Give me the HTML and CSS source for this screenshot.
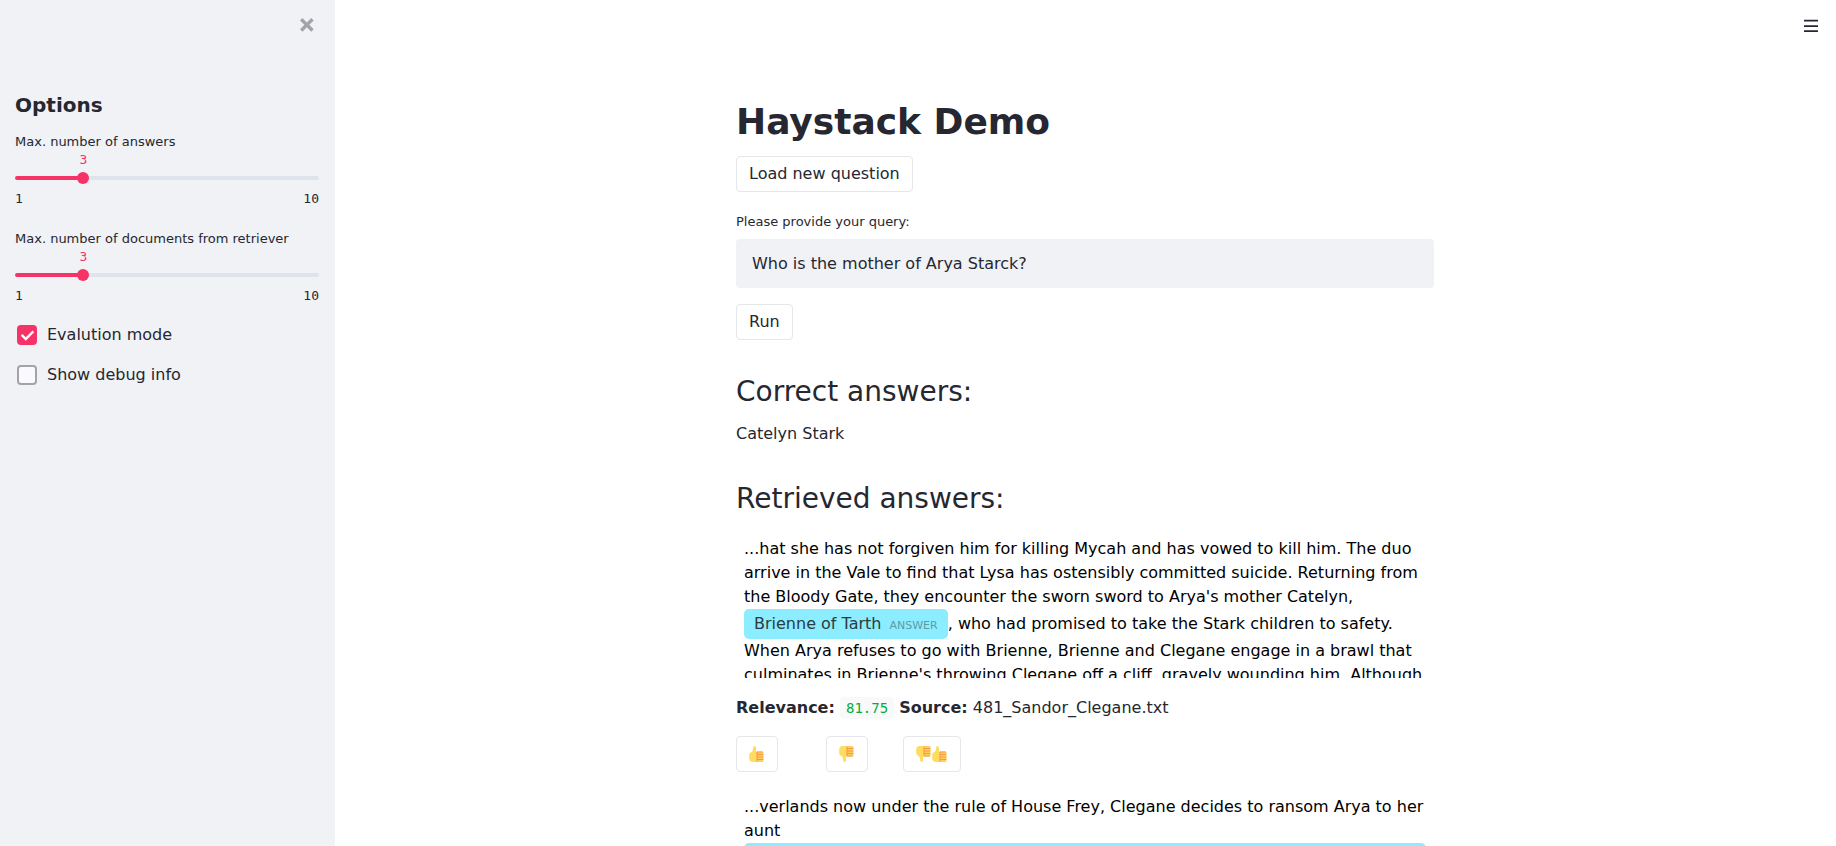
FILE: index.html
```html
<!DOCTYPE html>
<html lang="en">
<head>
<meta charset="utf-8">
<meta name="viewport" content="width=device-width, initial-scale=1">
<title>Haystack Demo</title>
<link rel="stylesheet" href="styles.css">
</head>
<body>
<svg class="sprite" aria-hidden="true">
  <symbol id="thumb" viewBox="0 0 16 16">
    <path fill="#ffdc5d" d="M5.200.2C6.600 0 7.100.9 7.100 2c0 1.600-.2 2.900-.1 3.700h1.500V16H4.200C1.500 16 .2 14.800.2 12.600V8.900c0-1.500.8-2.300 2.300-2.900C3.900 5.200 4.100 3.300 4.200 1.300 4.200.7 4.600.3 5.200.2z"/>
    <rect x="7.500" y="5.500" width="7" height="10.500" rx="1.300" fill="#ffd05c"/>
    <path fill="none" stroke="#f39a48" stroke-width="1" d="M7.800 6h6M8 8.500h6.300M8 11h6.300M8 13.500h6.300M8 6v9.500"/>
  </symbol>
</svg>
<div class="app">
  <aside class="sidebar">
    <div class="sidebar-top">
      <button class="icon-button" aria-label="Close sidebar">
        <svg width="14" height="14" viewBox="0 0 8 8" fill="currentColor"><path d="M1.406 0l-1.406 1.406.719.719 1.781 1.781-1.781 1.781-.719.719 1.406 1.438.719-.719 1.781-1.781 1.781 1.781.719.719 1.438-1.438-.719-.719-1.781-1.781 1.781-1.781.719-.719-1.438-1.406-.719.719-1.781 1.781-1.781-1.781-.719-.719z"/></svg>
      </button>
    </div>
    <h2 class="sidebar-title">Options</h2>
    <div class="slider">
      <label class="field-label" for="answers">Max. number of answers</label>
      <div class="slider-value"><output for="answers">3</output></div>
      <div class="slider-rail"><input id="answers" type="range" min="1" max="10" value="3"></div>
      <div class="slider-ends"><span>1</span><span>10</span></div>
    </div>
    <div class="slider">
      <label class="field-label" for="documents">Max. number of documents from retriever</label>
      <div class="slider-value"><output for="documents">3</output></div>
      <div class="slider-rail"><input id="documents" type="range" min="1" max="10" value="3"></div>
      <div class="slider-ends"><span>1</span><span>10</span></div>
    </div>
    <div class="checks">
      <label class="check"><input type="checkbox" checked>Evalution mode</label>
      <label class="check"><input type="checkbox">Show debug info</label>
    </div>
  </aside>
  <main class="main">
    <header class="topbar">
      <button class="icon-button menu" aria-label="Menu">
        <svg width="14" height="14" viewBox="0 0 14 14" fill="currentColor"><path d="M0 .7h14v1.700H0zM0 6.200h14v1.700H0zM0 11.200h14v1.700H0z"/></svg>
      </button>
    </header>
    <div class="content">
      <h1>Haystack Demo</h1>
      <button class="button">Load new question</button>
      <label class="field-label query-label" for="query">Please provide your query:</label>
      <input class="query" id="query" type="text" value="Who is the mother of Arya Starck?">
      <button class="button">Run</button>
      <h2>Correct answers:</h2>
      <p class="correct">Catelyn Stark</p>
      <h2>Retrieved answers:</h2>
      <div class="passage">...hat she has not forgiven him for killing Mycah and has vowed to kill him. The duo arrive in the Vale to find that Lysa has ostensibly committed suicide. Returning from the Bloody Gate, they encounter the sworn sword to Arya's mother Catelyn, <mark class="chip">Brienne of Tarth<span class="chip-tag">ANSWER</span></mark>, who had promised to take the Stark children to safety. When Arya refuses to go with Brienne, Brienne and Clegane engage in a brawl that culminates in Brienne's throwing Clegane off a cliff, gravely wounding him. Although</div>
      <p class="meta"><strong>Relevance:</strong> <code>81.75</code> <strong>Source:</strong> 481_Sandor_Clegane.txt</p>
      <div class="votes">
        <button class="button" aria-label="Correct"><svg class="emoji"><use href="#thumb"/></svg></button>
        <button class="button" aria-label="Wrong"><svg class="emoji down"><use href="#thumb"/></svg></button>
        <button class="button" aria-label="Wrong answer, correct passage"><svg class="emoji down"><use href="#thumb"/></svg><svg class="emoji"><use href="#thumb"/></svg></button>
      </div>
      <div class="passage">...verlands now under the rule of House Frey, Clegane decides to ransom Arya to her aunt <mark class="chip chip-wide"></mark></div>
    </div>
  </main>
</div>
</body>
</html>
```
FILE: styles.css
```css
* {
  box-sizing: border-box;
}

body {
  margin: 0;
  color: #262730;
  background: #fff;
  font: 16px/24px "DejaVu Sans", sans-serif;
}

button,
input {
  font: inherit;
  color: inherit;
}

h1,
h2,
p {
  margin: 0;
}

.sprite {
  position: absolute;
  width: 0;
  height: 0;
}

.app {
  display: flex;
  height: 100vh;
  overflow: hidden;
}

/* Sidebar */

.sidebar {
  flex: none;
  width: 335px;
  padding: 0 16px 16px 15px;
  background: #f0f2f6;
}

.sidebar-top {
  display: flex;
  justify-content: flex-end;
  height: 90px;
  padding: 18px 5px 0 0;
}

.icon-button {
  display: flex;
  align-self: flex-start;
  padding: 0;
  border: 0;
  background: none;
  color: #a3a4a9;
  cursor: pointer;
}

.sidebar-title {
  padding-bottom: 12px;
  font-size: 20px;
  line-height: 30px;
  font-weight: 700;
}

.field-label {
  display: block;
  font-size: 13px;
  line-height: 20px;
}

.slider + .slider {
  margin-top: 20px;
}

.slider-value {
  display: flex;
  width: 45%;
  justify-content: center;
  color: #f63366;
  font: 13px/16px "DejaVu Sans Mono", monospace;
}

.slider-rail {
  display: flex;
  align-items: center;
  height: 4px;
  margin: 8px 0 9px;
  border-radius: 2px;
  background: linear-gradient(to right, #f63366 22%, #dfe3eb 22%);
}

.slider-rail input {
  appearance: none;
  flex: none;
  width: calc(100% + 12px);
  height: 12px;
  margin: 0 -6px;
  background: none;
}

.slider-rail input::-webkit-slider-thumb {
  appearance: none;
  width: 12px;
  height: 12px;
  border-radius: 50%;
  background: #f63366;
}

.slider-ends {
  display: flex;
  justify-content: space-between;
  font: 13px/20px "DejaVu Sans Mono", monospace;
}

.checks {
  margin-top: 9px;
}

.check {
  display: flex;
  align-items: center;
  gap: 10px;
  height: 40px;
  padding-left: 2px;
}

.check input {
  appearance: none;
  width: 20px;
  height: 20px;
  margin: 0;
  border: 2px solid #a3a4a9;
  border-radius: 4px;
  background: #fafafc;
}

.check input:checked {
  border-color: #f63366;
  background: #f63366 url("data:image/svg+xml,%3Csvg xmlns='http://www.w3.org/2000/svg' viewBox='0 0 17 13'%3E%3Cpath fill='%23fafafc' d='M6.500 12.600.600 6.700l2-2 3.900 3.900 7.900-7.900 2 2z'/%3E%3C/svg%3E") center / 15px 11px no-repeat;
}

/* Main column */

.main {
  flex: 1;
  min-width: 0;
  padding-right: 1px;
}

.topbar {
  display: flex;
  justify-content: flex-end;
  height: 94px;
  padding: 19px 17px 0;
}

.menu {
  color: #262730;
}

.content {
  max-width: 730px;
  margin: 0 auto;
  padding: 0 16px;
}

h1 {
  padding-bottom: 6px;
  font-size: 36px;
  line-height: 56px;
  font-weight: 700;
}

.content h2 {
  padding: 30px 0 8px;
  font-size: 28px;
  line-height: 44px;
  font-weight: 400;
}

.button {
  display: inline-flex;
  align-items: center;
  height: 36px;
  padding: 0 12px;
  border: 1px solid #e6e7ea;
  border-radius: 4px;
  background: #fff;
  cursor: pointer;
}

.query-label {
  padding: 20px 0 7px;
}

.query {
  display: block;
  width: 100%;
  height: 49px;
  margin-bottom: 16px;
  padding: 0 16px;
  border: 0;
  border-radius: 4px;
  background: #f0f2f6;
}

.correct {
  margin-bottom: 1px;
}

.passage {
  height: 149px;
  padding: 8px;
  overflow: hidden;
  color: #000;
}

.chip {
  display: inline-block;
  padding: 7px 10px;
  border-radius: 5px;
  background: #8bedff;
  color: #2b3b40;
  line-height: 16px;
}

.chip-tag {
  margin-left: 8px;
  color: #5d9ba6;
  font-size: 11px;
  line-height: 11px;
}

.chip-wide {
  display: block;
  height: 46px;
}

.meta {
  padding: 18px 0 16px;
}

code {
  padding: 3px 6px;
  border-radius: 4px;
  background: #f8f9fb;
  color: #09ab3b;
  font: 14px "DejaVu Sans Mono", monospace;
}

.votes {
  display: grid;
  grid-template-columns: 90px 77px auto;
  justify-items: start;
  margin-bottom: 15px;
}

.emoji {
  width: 16px;
  height: 16px;
}

.down {
  transform: scaleY(-1);
}
```
